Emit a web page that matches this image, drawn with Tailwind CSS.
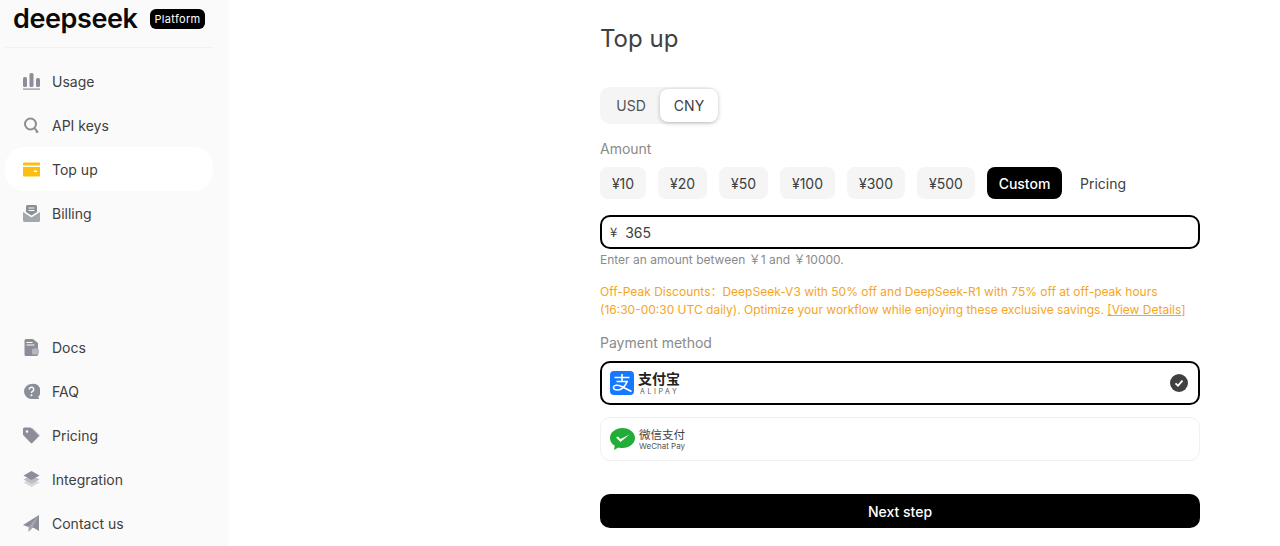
<!DOCTYPE html>
<html lang="en">
<head>
    <meta charset="UTF-8">
    <meta name="viewport" content="width=device-width, initial-scale=1.0">
    <title>Top up</title>
    <script src="https://cdn.jsdelivr.net/npm/@tailwindcss/browser@4"></script>
</head>
<body class="bg-white h-[546px] overflow-hidden font-['Inter','Noto_Sans_CJK_SC',sans-serif] text-[14px] text-[#404040]">
<div class="flex h-[546px]">
    <!-- Sidebar -->
    <aside class="w-[229px] shrink-0 bg-[#fafafa] px-[5px] pb-[1px] flex flex-col justify-between">
        <div>
            <div class="h-[48px] border-b border-[#f2f2f2] w-[208px] flex items-center pl-[8px] pb-[9px]">
                <span class="w-[127px] text-[27px] leading-none font-semibold text-[#0a0a0a] tracking-[-0.4px] -mt-[1px]">deepseek</span>
                <span class="ml-[10px] h-[20px] w-[55px] rounded-[6px] bg-black text-white text-[11px] tracking-[0.3px] flex items-center justify-center">Platform</span>
            </div>
            <nav class="mt-[11px] w-[208px]">
                <a class="flex items-center h-[44px] pl-[18px] gap-[12px]">
                    <svg class="w-[17px] h-[17px]" viewBox="0 0 17 17" fill="#8b8d98"><rect x="0" y="4" width="4" height="10" rx="1.5"/><rect x="6.5" y="0" width="4" height="14" rx="1.5"/><rect x="13" y="5" width="4" height="9" rx="1.5"/><rect y="15.5" width="17" height="1.2"/></svg>
                    <span>Usage</span>
                </a>
                <a class="flex items-center h-[44px] pl-[18px] gap-[12px]">
                    <svg class="w-[17px] h-[17px]" viewBox="0 0 17 17" fill="none" stroke="#8b8d98"><circle cx="7.5" cy="7" r="5.5" stroke-width="2"/><path d="M11.5 11l3.500 4.500M13 15.500l1.500-1.500" stroke-width="2"/></svg>
                    <span>API keys</span>
                </a>
                <a class="flex items-center h-[44px] pl-[18px] gap-[12px] bg-white rounded-[20px]">
                    <svg class="w-[17px] h-[17px]" viewBox="0 0 17 14" fill="#fbbf0e"><path d="M0 1a1 1 0 011-1h15a1 1 0 011 1v2H0zM0 4.500h17V13a1 1 0 01-1 1H1a1 1 0 01-1-1z"/><rect x="11" y="8" width="3" height="1.500" fill="#fff"/></svg>
                    <span>Top up</span>
                </a>
                <a class="flex items-center h-[44px] pl-[18px] gap-[12px]">
                    <svg class="w-[17px] h-[17px]" viewBox="0 0 17 17" fill="#8b8d98"><path d="M3 1.500a1.500 1.500 0 011.500-1.500h8A1.500 1.500 0 0114 1.500V7l-5.500 3.500L3 7z"/><path d="M0 7l8.500 5.500L17 7v8.500a1.500 1.500 0 01-1.500 1.500h-14A1.500 1.500 0 010 15.500z" fill="#a5a7b0"/><path d="M5.500 3h6M5.500 5.500h6" stroke="#fafafa" stroke-width="1"/></svg>
                    <span>Billing</span>
                </a>
            </nav>
        </div>
        <nav class="w-[208px]">
            <a class="flex items-center h-[44px] pl-[18px] gap-[12px]">
                <svg class="w-[17px] h-[17px]" viewBox="0 0 17 17" fill="#8b8d98"><path d="M1.500 1.500A1.500 1.500 0 013 0h7l5 4v11.500a1.500 1.500 0 01-1.500 1.500H3a1.500 1.500 0 01-1.500-1.500z"/><rect x="9" y="9.500" width="7" height="6" rx="1.500" fill="#b6b8c0"/><path d="M3.500 3.500h6M3.500 6h8" stroke="#fafafa"/></svg>
                <span>Docs</span>
            </a>
            <a class="flex items-center h-[44px] pl-[18px] gap-[12px]">
                <svg class="w-[17px] h-[17px]" viewBox="0 0 17 17" fill="#8b8d98"><path d="M8.500 1a7.500 7.500 0 100 15H16v-1l-1-1a7.500 7.500 0 00-6.500-13z"/><path d="M6.300 6.500a2.200 2.200 0 114 1.200c-.7.700-1.800 1-1.800 2.300" fill="none" stroke="#fafafa" stroke-width="1.500"/><circle cx="8.500" cy="12.300" r="1" fill="#fafafa"/></svg>
                <span>FAQ</span>
            </a>
            <a class="flex items-center h-[44px] pl-[18px] gap-[12px]">
                <svg class="w-[17px] h-[17px]" viewBox="0 0 17 17"><path d="M9 .5l8 8-7 7z" fill="#c4c5cc"/><path d="M0 2a1.500 1.500 0 011.500-1.500H7a2 2 0 011.300.500l7 7a1 1 0 010 1.500l-6 6.500a1 1 0 01-1.500 0L.6 8.500A2 2 0 010 7z" fill="#8b8d98"/><circle cx="4" cy="4.500" r="1.300" fill="#fafafa"/></svg>
                <span>Pricing</span>
            </a>
            <a class="flex items-center h-[44px] pl-[18px] gap-[12px]">
                <svg class="w-[17px] h-[17px]" viewBox="0 0 17 17"><path d="M8.500 8l8 3.500-8 4.500-8-4.500z" fill="#d7d8dd"/><path d="M8.500 4.500l8 4-8 4.500-8-4.500z" fill="#bcbec6"/><path d="M8.500 0l8 4.500-8 4.500-8-4.500z" fill="#8b8d98"/></svg>
                <span>Integration</span>
            </a>
            <a class="flex items-center h-[44px] pl-[18px] gap-[12px]">
                <svg class="w-[17px] h-[17px]" viewBox="0 0 17 17" fill="#8b8d98"><path d="M16 0v16l-5-3-7-1.500L0 10z"/><path d="M16 0L5.500 12v5l3.500-3.500z" fill="#a5a7b0"/></svg>
                <span>Contact us</span>
            </a>
        </nav>
    </aside>

    <!-- Main -->
    <main class="pl-[371px] w-[971px] shrink-0">
        <h1 class="text-[24px] leading-[32px] mt-[23px]">Top up</h1>

        <div class="mt-[32px] w-[118px] h-[37px] bg-[#f5f5f5] rounded-[10px] flex items-center pl-[2px]">
            <span class="w-[58px] text-center text-[#525252]">USD</span>
            <span class="w-[58px] h-[33px] bg-white rounded-[8px] shadow-[0_1px_4px_rgba(0,0,0,0.25)] flex items-center justify-center">CNY</span>
        </div>

        <p class="mt-[16px] leading-[18px] text-[#8a8a8a]">Amount</p>

        <div class="mt-[9px] flex items-center gap-[12px] h-[32px]">
            <span class="w-[46px] h-[32px] bg-[#f5f5f5] rounded-[8px] flex items-center justify-center">¥10</span>
            <span class="w-[49px] h-[32px] bg-[#f5f5f5] rounded-[8px] flex items-center justify-center">¥20</span>
            <span class="w-[49px] h-[32px] bg-[#f5f5f5] rounded-[8px] flex items-center justify-center">¥50</span>
            <span class="w-[55px] h-[32px] bg-[#f5f5f5] rounded-[8px] flex items-center justify-center">¥100</span>
            <span class="w-[58px] h-[32px] bg-[#f5f5f5] rounded-[8px] flex items-center justify-center">¥300</span>
            <span class="w-[58px] h-[32px] bg-[#f5f5f5] rounded-[8px] flex items-center justify-center">¥500</span>
            <span class="w-[75px] h-[32px] bg-black text-white font-medium rounded-[8px] flex items-center justify-center">Custom</span>
            <span class="ml-[6px] mt-[1px]">Pricing</span>
        </div>

        <div class="mt-[16px] w-[600px] h-[34px] border-2 border-black rounded-[10px] flex items-center pl-[8px]">
            <span class="text-[13px] font-['Noto_Sans_CJK_SC',sans-serif]">¥</span>
            <span class="ml-[8px]">365</span>
        </div>

        <p class="mt-[2px] text-[12px] leading-[18px] text-[#8a8a8a]">Enter an amount between ￥1 and ￥10000.</p>

        <p class="mt-[14px] w-[600px] text-[12px] leading-[18px] text-[#f5a524]">Off-Peak Discounts：DeepSeek-V3 with 50% off and DeepSeek-R1 with 75% off at off-peak hours (16:30-00:30 UTC daily). Optimize your workflow while enjoying these exclusive savings. <span class="underline">[View Details]</span></p>

        <p class="mt-[15px] leading-[18px] text-[#8a8a8a]">Payment method</p>

        <div class="mt-[9px] w-[600px] h-[44px] border-2 border-black rounded-[10px] flex items-center justify-between pl-[8px] pr-[10px]">
            <div class="flex items-center gap-[4px]">
                <svg class="w-[24px] h-[24px]" viewBox="0 0 24 24"><rect width="24" height="24" rx="4" fill="#1677ff"/><path d="M4.500 6.500h15M6.500 10.500h11.500M12 3v7.500M17 10.500c-1.500 5-5.500 8.500-9.500 8.500-3 0-4.500-1.500-4-3 .5-2 4-2.500 8-.500l10 5" fill="none" stroke="#fff" stroke-width="1.600"/></svg>
                <div class="flex flex-col gap-[3px]">
                    <span class="text-[14px] leading-[14px] font-bold text-[#222] font-['Noto_Sans_CJK_SC',sans-serif]">支付宝</span>
                    <span class="ml-[2px] text-[7px] leading-[7px] tracking-[2.600px] text-[#555]">ALIPAY</span>
                </div>
            </div>
            <svg class="w-[18px] h-[18px]" viewBox="0 0 18 18"><circle cx="9" cy="9" r="9" fill="#404040"/><path d="M5.500 9.300l2.500 2.300 4.500-5" fill="none" stroke="#fff" stroke-width="1.800"/></svg>
        </div>

        <div class="mt-[12px] w-[600px] h-[44px] border border-[#f0f0f0] rounded-[10px] flex items-center pl-[9px] gap-[4px]">
            <svg class="w-[25px] h-[24px]" viewBox="0 0 25 24"><path d="M12.500 1C5.600 1 0 5.400 0 11c0 3.200 1.800 6 4.700 7.800L4 23l4.400-2.600c1.300.4 2.700.6 4.100.6C19.400 21 25 16.500 25 11S19.400 1 12.500 1z" fill="#22ac38"/><path d="M6 10.500l4.500 4.500 9-7.500-9 4.500-2.500-2.500z" fill="#fff"/></svg>
            <div class="flex flex-col">
                <span class="text-[11.500px] leading-[13px] text-[#444] font-['Noto_Sans_CJK_SC',sans-serif]">微信支付</span>
                <span class="text-[8px] leading-[10px] text-[#555]">WeChat Pay</span>
            </div>
        </div>

        <button class="mt-[33px] w-[600px] h-[34px] bg-black text-white font-medium rounded-[10px]">Next step</button>
    </main>
</div>
</body>
</html>
